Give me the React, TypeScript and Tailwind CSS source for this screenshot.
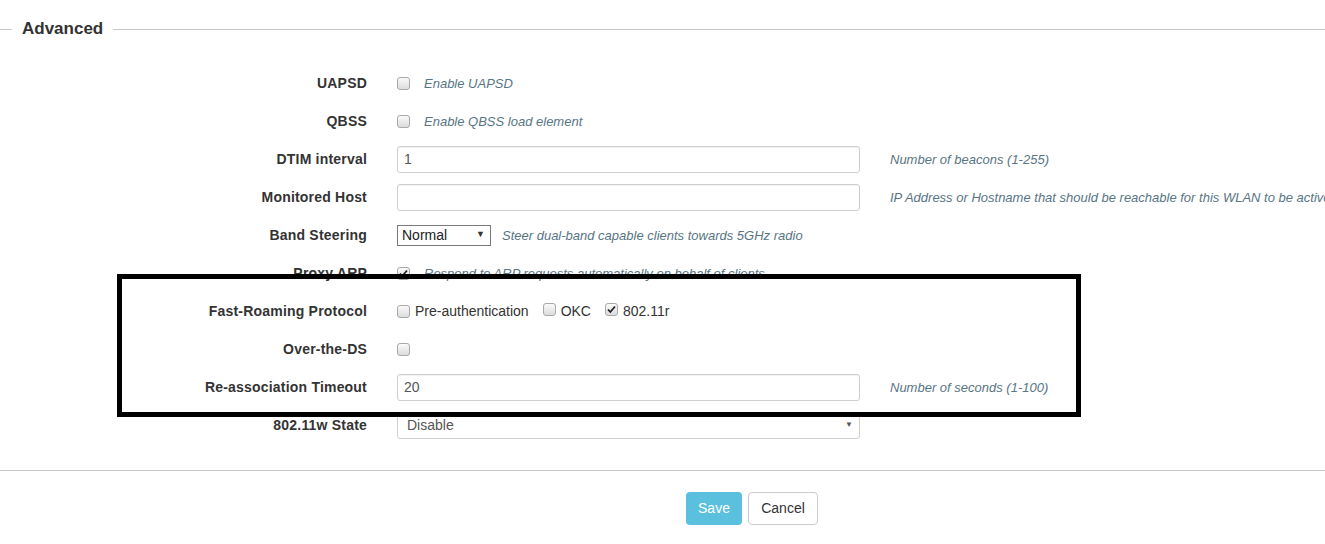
import React from 'react';

const font = { fontFamily: '"Liberation Sans", Arial, sans-serif' };

function Box({ checked = false }: { checked?: boolean }) {
  return (
    <span className="relative inline-block w-[13px] h-[13px] shrink-0 rounded-[3px] border border-[#a9a9a9] bg-gradient-to-b from-[#fafafa] to-[#dcdcdc]">
      {checked && (
        <svg viewBox="0 0 13 13" className="absolute -left-px -top-px w-[13px] h-[13px]">
          <path d="M3 6.5 L5.3 9 L10 3.5" fill="none" stroke="#222" strokeWidth="1.8" />
        </svg>
      )}
    </span>
  );
}

function Help({ children }: { children: React.ReactNode }) {
  return <span className="text-[13px] italic text-[#587584] whitespace-nowrap">{children}</span>;
}

function Row({ label, children, help }: { label: string; children: React.ReactNode; help?: string }) {
  return (
    <div className="flex items-center h-[38px]">
      <div className="w-[367px] shrink-0 text-right text-[14px] font-bold tracking-[0.2px] text-[#333] whitespace-nowrap">{label}</div>
      <div className="w-[463px] shrink-0 ml-[30px] flex items-center">{children}</div>
      {help && <div className="ml-[30px] shrink-0"><Help>{help}</Help></div>}
    </div>
  );
}

function TextInput({ value = '' }: { value?: string }) {
  return (
    <div className="w-full h-[27px] rounded-[3px] border border-[#cfcfcf] bg-white shadow-[inset_0_1px_1px_rgba(0,0,0,0.06)] flex items-center pl-[6px] text-[14px] text-[#555]">
      {value}
    </div>
  );
}

export default function App() {
  return (
    <div className="relative w-[1325px] h-[544px] overflow-hidden bg-white" style={font}>
      {/* Legend */}
      <div className="flex items-center h-[58px]">
        <div className="w-[12px] h-px bg-[#c8c8c8]" />
        <span className="px-[10px] text-[17px] font-bold text-[#333]">Advanced</span>
        <div className="flex-1 h-px bg-[#c8c8c8]" />
      </div>

      <div className="mt-[6px]">
        <Row label="UAPSD">
          <Box />
          <span className="ml-[14px]"><Help>Enable UAPSD</Help></span>
        </Row>
        <Row label="QBSS">
          <Box />
          <span className="ml-[14px]"><Help>Enable QBSS load element</Help></span>
        </Row>
        <Row label="DTIM interval" help="Number of beacons (1-255)">
          <TextInput value="1" />
        </Row>
        <Row label="Monitored Host" help="IP Address or Hostname that should be reachable for this WLAN to be active">
          <TextInput />
        </Row>
        <Row label="Band Steering">
          <div className="w-[94px] h-[21px] border border-[#7a7a7a] bg-white flex items-center justify-between pl-[4px] pr-[5px] text-[14px] text-[#222] shrink-0">
            <span>Normal</span>
            <span className="text-[9px] text-[#333]">▼</span>
          </div>
          <span className="ml-[11px]"><Help>Steer dual-band capable clients towards 5GHz radio</Help></span>
        </Row>
        <Row label="Proxy ARP">
          <Box checked />
          <span className="ml-[14px]"><Help>Respond to ARP requests automatically on behalf of clients</Help></span>
        </Row>
        <Row label="Fast-Roaming Protocol">
          <div className="flex items-center text-[14px] text-[#333]">
            <Box />
            <span className="ml-[5px]">Pre-authentication</span>
            <span className="ml-[14px]"><Box /></span>
            <span className="ml-[5px]">OKC</span>
            <span className="ml-[14px]"><Box checked /></span>
            <span className="ml-[5px]">802.11r</span>
          </div>
        </Row>
        <Row label="Over-the-DS">
          <Box />
        </Row>
        <Row label="Re-association Timeout" help="Number of seconds (1-100)">
          <TextInput value="20" />
        </Row>
        <Row label="802.11w State">
          <div className="w-full h-[27px] rounded-[3px] border border-[#cfcfcf] bg-white flex items-center justify-between pl-[9px] pr-[6px] text-[14px] text-[#555]">
            <span>Disable</span>
            <span className="text-[8px] text-[#555]">▼</span>
          </div>
        </Row>
      </div>

      <div className="mt-[26px] h-px bg-[#c8c8c8]" />

      <div className="flex mt-[21px] ml-[686px] gap-[6px]">
        <button className="w-[56px] h-[33px] rounded-[4px] bg-[#5bc0de] text-white text-[14px]">Save</button>
        <button className="w-[70px] h-[33px] rounded-[4px] border border-[#ccc] bg-white text-[#333] text-[14px]">Cancel</button>
      </div>

      {/* Highlight frame drawn over the form */}
      <div className="absolute left-[117px] top-[274px] w-[964px] h-[143px] border-[5px] border-black" />
    </div>
  );
}
